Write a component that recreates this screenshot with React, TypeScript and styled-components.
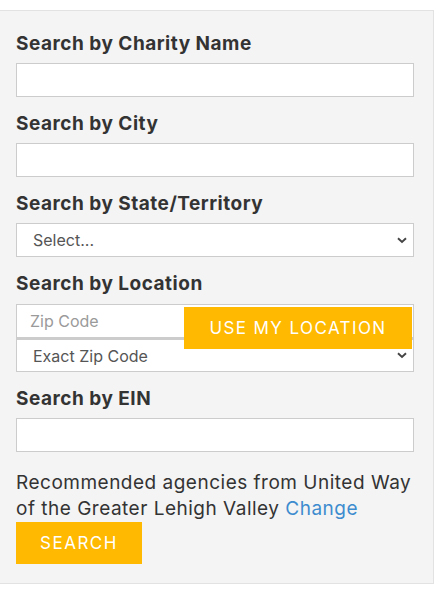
import React from 'react';
import styled, { createGlobalStyle } from 'styled-components';

const GlobalStyle = createGlobalStyle`
  html, body {
    margin: 0;
    padding: 0;
    background: #ffffff;
  }
  body {
    font-family: Inter, 'Open Sans', Arial, sans-serif;
    color: #333333;
  }
`;

function Chevron() {
  return (
    <S.Chevron width='10' height='7' viewBox='0 0 10 7'>
      <path d='M1 1.2 L5 5 L9 1.2' fill='none' stroke='#444' strokeWidth='1.9' />
    </S.Chevron>
  );
}

function App() {
  return (
    <>
      <GlobalStyle />
      <S.Page>
        <S.Panel>
          <S.Field>
            <S.Label>Search by Charity Name</S.Label>
            <S.Input type='text' />
          </S.Field>
          <S.Field>
            <S.Label>Search by City</S.Label>
            <S.Input type='text' />
          </S.Field>
          <S.Field>
            <S.Label>Search by State/Territory</S.Label>
            <S.SelectWrap>
              <S.Select defaultValue=''>
                <option value=''>Select...</option>
              </S.Select>
              <Chevron />
            </S.SelectWrap>
          </S.Field>
          <S.Field>
            <S.Label>Search by Location</S.Label>
            <S.LocationGroup>
              <S.Input type='text' placeholder='Zip Code' />
              <S.SelectWrap>
                <S.Select defaultValue='exact' $joined>
                  <option value='exact'>Exact Zip Code</option>
                </S.Select>
                <Chevron />
              </S.SelectWrap>
              <S.LocationButton type='button'>Use my location</S.LocationButton>
            </S.LocationGroup>
          </S.Field>
          <S.Field>
            <S.Label>Search by EIN</S.Label>
            <S.Input type='text' />
          </S.Field>
          <S.Note>
            Recommended agencies from United Way of the Greater Lehigh Valley{' '}
            <S.Link href='#'>Change</S.Link>
          </S.Note>
          <S.SearchButton type='button'>Search</S.SearchButton>
        </S.Panel>
      </S.Page>
    </>
  );
}

const S: {
  Page: any;
  Panel: any;
  Field: any;
  Label: any;
  Input: any;
  SelectWrap: any;
  Select: any;
  Chevron: any;
  LocationGroup: any;
  LocationButton: any;
  Note: any;
  Link: any;
  SearchButton: any;
} = {
  Page: styled.div`
    padding-top: 10px;
  `,
  Panel: styled.div`
    width: 434px;
    padding: 6px 19px 19px 16px;
    box-sizing: border-box;
    background-color: #f4f4f4;
    border: 1px solid #e2e2e2;
    border-left: none;
  `,
  Field: styled.div`
    display: flex;
    flex-direction: column;
  `,
  Label: styled.label`
    display: block;
    font-size: 19px;
    font-weight: 700;
    letter-spacing: 0.5px;
    line-height: 23px;
    color: #333333;
    margin: 15px 0 8px;
  `,
  Input: styled.input`
    box-sizing: border-box;
    width: 100%;
    height: 34px;
    margin: 0;
    padding: 0 13px;
    border: 1px solid #cccccc;
    border-radius: 0;
    background: #ffffff;
    font-family: Inter, Arial, sans-serif;
    font-size: 16px;
    color: #555555;
    outline: none;

    &::placeholder {
      color: #9a9a9a;
    }
  `,
  SelectWrap: styled.div`
    position: relative;
  `,
  Select: styled.select`
    box-sizing: border-box;
    width: 100%;
    height: 34px;
    margin: 0;
    padding: 0 16px;
    border: 1px solid #cccccc;
    border-top-width: ${({ $joined }: { $joined?: boolean }) => ($joined ? '2px' : '1px')};
    border-radius: 0;
    background: #ffffff;
    appearance: none;
    -webkit-appearance: none;
    font-family: Inter, Arial, sans-serif;
    font-size: 16px;
    color: #555555;
    outline: none;
  `,
  Chevron: styled.svg`
    position: absolute;
    right: 7px;
    top: 50%;
    margin-top: -3px;
    pointer-events: none;
  `,
  LocationGroup: styled.div`
    position: relative;
    margin-top: 1px;
  `,
  LocationButton: styled.button`
    position: absolute;
    top: 3px;
    right: 2px;
    width: 228px;
    height: 42px;
    padding: 0;
    border: none;
    border-radius: 0;
    background-color: #ffb900;
    color: #ffffff;
    font-family: Inter, Arial, sans-serif;
    font-size: 17px;
    letter-spacing: 1.4px;
    text-transform: uppercase;
    cursor: pointer;
  `,
  Note: styled.p`
    margin: 18px 0 0;
    font-size: 19px;
    letter-spacing: 0.5px;
    line-height: 26px;
    color: #333333;
  `,
  Link: styled.a`
    color: #3d8ccf;
    text-decoration: none;
  `,
  SearchButton: styled.button`
    display: block;
    margin-top: 0;
    width: 126px;
    height: 42px;
    padding: 0;
    border: none;
    border-radius: 0;
    background-color: #ffb900;
    color: #ffffff;
    font-family: Inter, Arial, sans-serif;
    font-size: 17px;
    letter-spacing: 1.5px;
    text-transform: uppercase;
    cursor: pointer;
  `
};

export default App;
